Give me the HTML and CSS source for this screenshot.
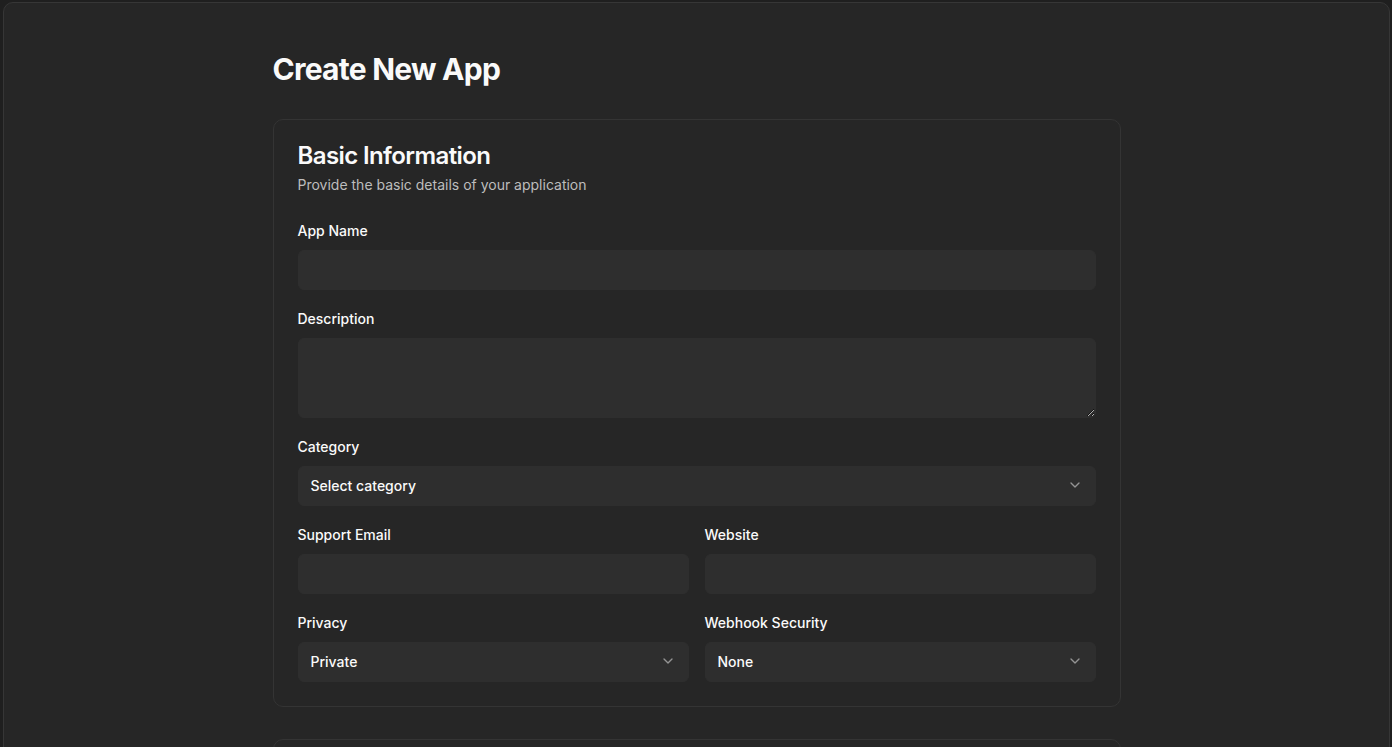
FILE: index.html
```html
<!DOCTYPE html>
<html lang="en">
<head>
<meta charset="utf-8">
<title>Create New App</title>
<link rel="stylesheet" href="styles.css">
</head>
<body>
<div class="frame">
  <main class="container">
    <h1 class="page-title">Create New App</h1>

    <section class="card">
      <header class="card-header">
        <h2 class="card-title">Basic Information</h2>
        <p class="card-desc">Provide the basic details of your application</p>
      </header>
      <div class="card-content">
        <div class="field">
          <label class="label" for="name">App Name</label>
          <input class="input" id="name" type="text">
        </div>
        <div class="field">
          <label class="label" for="desc">Description</label>
          <textarea class="input textarea" id="desc"></textarea>
        </div>
        <div class="field">
          <label class="label">Category</label>
          <button class="select" type="button">
            <span>Select category</span>
            <svg class="chev" viewBox="0 0 24 24" width="16" height="16" fill="none" stroke="currentColor" stroke-width="2" stroke-linecap="round" stroke-linejoin="round"><path d="m6 9 6 6 6-6"/></svg>
          </button>
        </div>
        <div class="row">
          <div class="field">
            <label class="label" for="email">Support Email</label>
            <input class="input" id="email" type="email">
          </div>
          <div class="field">
            <label class="label" for="web">Website</label>
            <input class="input" id="web" type="url">
          </div>
        </div>
        <div class="row">
          <div class="field">
            <label class="label">Privacy</label>
            <button class="select" type="button">
              <span>Private</span>
              <svg class="chev" viewBox="0 0 24 24" width="16" height="16" fill="none" stroke="currentColor" stroke-width="2" stroke-linecap="round" stroke-linejoin="round"><path d="m6 9 6 6 6-6"/></svg>
            </button>
          </div>
          <div class="field">
            <label class="label">Webhook Security</label>
            <button class="select" type="button">
              <span>None</span>
              <svg class="chev" viewBox="0 0 24 24" width="16" height="16" fill="none" stroke="currentColor" stroke-width="2" stroke-linecap="round" stroke-linejoin="round"><path d="m6 9 6 6 6-6"/></svg>
            </button>
          </div>
        </div>
      </div>
    </section>

    <section class="card card-next"></section>
  </main>
</div>
</body>
</html>
```

FILE: styles.css
```css
* { box-sizing: border-box; }

html, body {
  margin: 0;
  padding: 0;
  background: #1f1f1f;
  height: 100%;
  overflow: hidden;
}

body {
  font-family: Inter, "Noto Sans", sans-serif;
  color: #fafafa;
}

.frame {
  margin: 2px 2px 0 3px;
  border: 1px solid #363636;
  border-radius: 10px;
  background: #262626;
  min-height: 900px;
}

.container {
  max-width: 896px;
  margin: 0 auto;
  padding: 48px 24px 40px;
}

.page-title {
  margin: 0 0 32px;
  font-size: 30px;
  line-height: 36px;
  font-weight: 700;
  letter-spacing: -0.025em;
}

.card {
  border: 1px solid #343434;
  border-radius: 10px;
  background: #262626;
}

.card-next {
  margin-top: 32px;
  min-height: 200px;
}

.card-header {
  padding: 24px 24px 26px;
}

.card-title {
  margin: 0;
  font-size: 24px;
  line-height: 24px;
  font-weight: 600;
  letter-spacing: -0.025em;
}

.card-desc {
  margin: 7px 0 0;
  font-size: 14px;
  line-height: 20px;
  color: #bdbdbd;
}

.card-content {
  padding: 0 24px 24px;
  display: flex;
  flex-direction: column;
  gap: 19px;
}

.row {
  display: grid;
  grid-template-columns: 1fr 1fr;
  gap: 16px;
}

.field {
  display: flex;
  flex-direction: column;
  gap: 9px;
}

.label {
  font-size: 14px;
  line-height: 20px;
  font-weight: 500;
  color: #fafafa;
}

.input {
  display: block;
  width: 100%;
  height: 40px;
  margin: 0;
  padding: 8px 12px;
  border: 1px solid #2e2e2e;
  border-radius: 6px;
  background: #2e2e2e;
  color: #fafafa;
  font-family: inherit;
  font-size: 14px;
  outline: none;
}

.textarea {
  height: 80px;
  resize: vertical;
}

.select {
  display: flex;
  align-items: center;
  justify-content: space-between;
  width: 100%;
  height: 40px;
  margin: 0;
  padding: 0 12px 2px;
  border: 1px solid #2e2e2e;
  border-radius: 6px;
  background: #2e2e2e;
  color: #fafafa;
  font-family: inherit;
  font-size: 14px;
  font-weight: 500;
  text-align: left;
  cursor: pointer;
}

.chev {
  color: #fafafa;
  opacity: 0.5;
  flex: none;
}
```
